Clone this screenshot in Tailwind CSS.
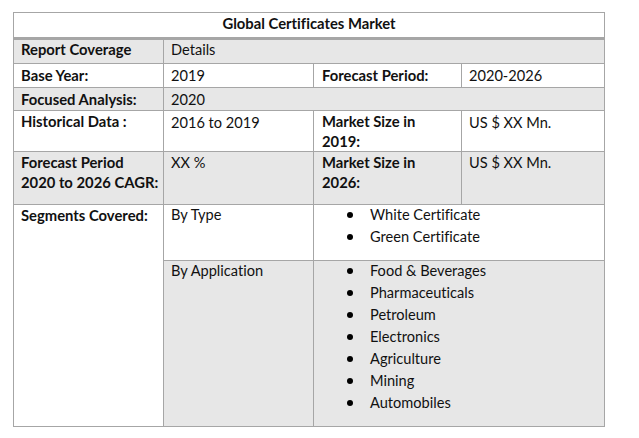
<!DOCTYPE html>
<html lang="en">
<head>
    <meta charset="UTF-8">
    <title>Global Certificates Market</title>
    <script src="https://cdn.jsdelivr.net/npm/@tailwindcss/browser@4"></script>
</head>
<body class="bg-white text-[#111] font-['Lato','Open_Sans',sans-serif] text-[14.6px] leading-[20px] [font-variant-ligatures:none]">
    <div class="pt-[12px] pl-[13px]">
        <table class="table-fixed border-collapse w-[591px]">
            <colgroup>
                <col class="w-[150px]">
                <col class="w-[150px]">
                <col class="w-[148px]">
                <col class="w-[143px]">
            </colgroup>
            <tbody>
                <tr class="h-[26px]">
                    <td colspan="4" class="border border-[#a6a6a6] border-b-[3px] text-center font-bold text-[14.8px] align-top p-0">Global Certificates Market</td>
                </tr>
                <tr class="h-[25px] bg-[#e7e7e7]">
                    <td class="border border-[#a6a6a6] align-top px-[7px] pt-0 leading-[18px] font-bold text-[14.8px]">Report Coverage</td>
                    <td colspan="3" class="border border-[#a6a6a6] align-top px-[7px] pt-0">Details</td>
                </tr>
                <tr class="h-[24px]">
                    <td class="border border-[#a6a6a6] align-top px-[7px] pt-px font-bold text-[14.8px]">Base Year:</td>
                    <td class="border border-[#a6a6a6] align-top px-[7px] pt-[2px]">2019</td>
                    <td class="border border-[#a6a6a6] align-top px-[8px] pt-px font-bold text-[14.8px]">Forecast Period:</td>
                    <td class="border border-[#a6a6a6] align-top px-[7px] pt-[2px]">2020-2026</td>
                </tr>
                <tr class="h-[23px] bg-[#e7e7e7]">
                    <td class="border border-[#a6a6a6] align-top px-[7px] pt-px font-bold text-[14.8px]">Focused Analysis:</td>
                    <td colspan="3" class="border border-[#a6a6a6] align-top px-[7px] pt-[2px]">2020</td>
                </tr>
                <tr class="h-[40px]">
                    <td class="border border-[#a6a6a6] align-top px-[7px] pt-px leading-[19.5px] font-bold text-[14.8px]">Historical Data :</td>
                    <td class="border border-[#a6a6a6] align-top px-[7px] pt-[2px]">2016 to 2019</td>
                    <td class="border border-[#a6a6a6] align-top px-[8px] pt-px leading-[19.5px] font-bold text-[14.8px]">Market Size in 2019:</td>
                    <td class="border border-[#a6a6a6] align-top px-[7px] pt-[2px]">US $ XX Mn.</td>
                </tr>
                <tr class="h-[53px] bg-[#e7e7e7]">
                    <td class="border border-[#a6a6a6] align-top px-[7px] pt-0 font-bold text-[14.8px] whitespace-nowrap">Forecast Period<br>2020 to 2026 CAGR:</td>
                    <td class="border border-[#a6a6a6] align-top px-[7px] pt-px">XX %</td>
                    <td class="border border-[#a6a6a6] align-top px-[8px] pt-0 font-bold text-[14.8px]">Market Size in 2026:</td>
                    <td class="border border-[#a6a6a6] align-top px-[7px] pt-px">US $ XX Mn.</td>
                </tr>
                <tr class="h-[56px]">
                    <td rowspan="2" class="border border-[#a6a6a6] align-top px-[7px] font-bold text-[14.8px]">Segments Covered:</td>
                    <td class="border border-[#a6a6a6] align-top px-[7px]">By Type</td>
                    <td colspan="2" class="border border-[#a6a6a6] align-top p-0">
                        <ul class="leading-[22px] -mt-px">
                            <li class="flex items-center gap-[17px] pl-[33px]"><span class="w-[6px] h-[6px] rounded-full bg-black"></span>White Certificate</li>
                            <li class="flex items-center gap-[17px] pl-[33px]"><span class="w-[6px] h-[6px] rounded-full bg-black"></span>Green Certificate</li>
                        </ul>
                    </td>
                </tr>
                <tr class="h-[166px] bg-[#e7e7e7]">
                    <td class="border border-[#a6a6a6] align-top px-[7px]">By Application</td>
                    <td colspan="2" class="border border-[#a6a6a6] align-top p-0">
                        <ul class="leading-[22px] -mt-px">
                            <li class="flex items-center gap-[17px] pl-[33px]"><span class="w-[6px] h-[6px] rounded-full bg-black"></span>Food &amp; Beverages</li>
                            <li class="flex items-center gap-[17px] pl-[33px]"><span class="w-[6px] h-[6px] rounded-full bg-black"></span>Pharmaceuticals</li>
                            <li class="flex items-center gap-[17px] pl-[33px]"><span class="w-[6px] h-[6px] rounded-full bg-black"></span>Petroleum</li>
                            <li class="flex items-center gap-[17px] pl-[33px]"><span class="w-[6px] h-[6px] rounded-full bg-black"></span>Electronics</li>
                            <li class="flex items-center gap-[17px] pl-[33px]"><span class="w-[6px] h-[6px] rounded-full bg-black"></span>Agriculture</li>
                            <li class="flex items-center gap-[17px] pl-[33px]"><span class="w-[6px] h-[6px] rounded-full bg-black"></span>Mining</li>
                            <li class="flex items-center gap-[17px] pl-[33px]"><span class="w-[6px] h-[6px] rounded-full bg-black"></span>Automobiles</li>
                        </ul>
                    </td>
                </tr>
            </tbody>
        </table>
    </div>
</body>
</html>
